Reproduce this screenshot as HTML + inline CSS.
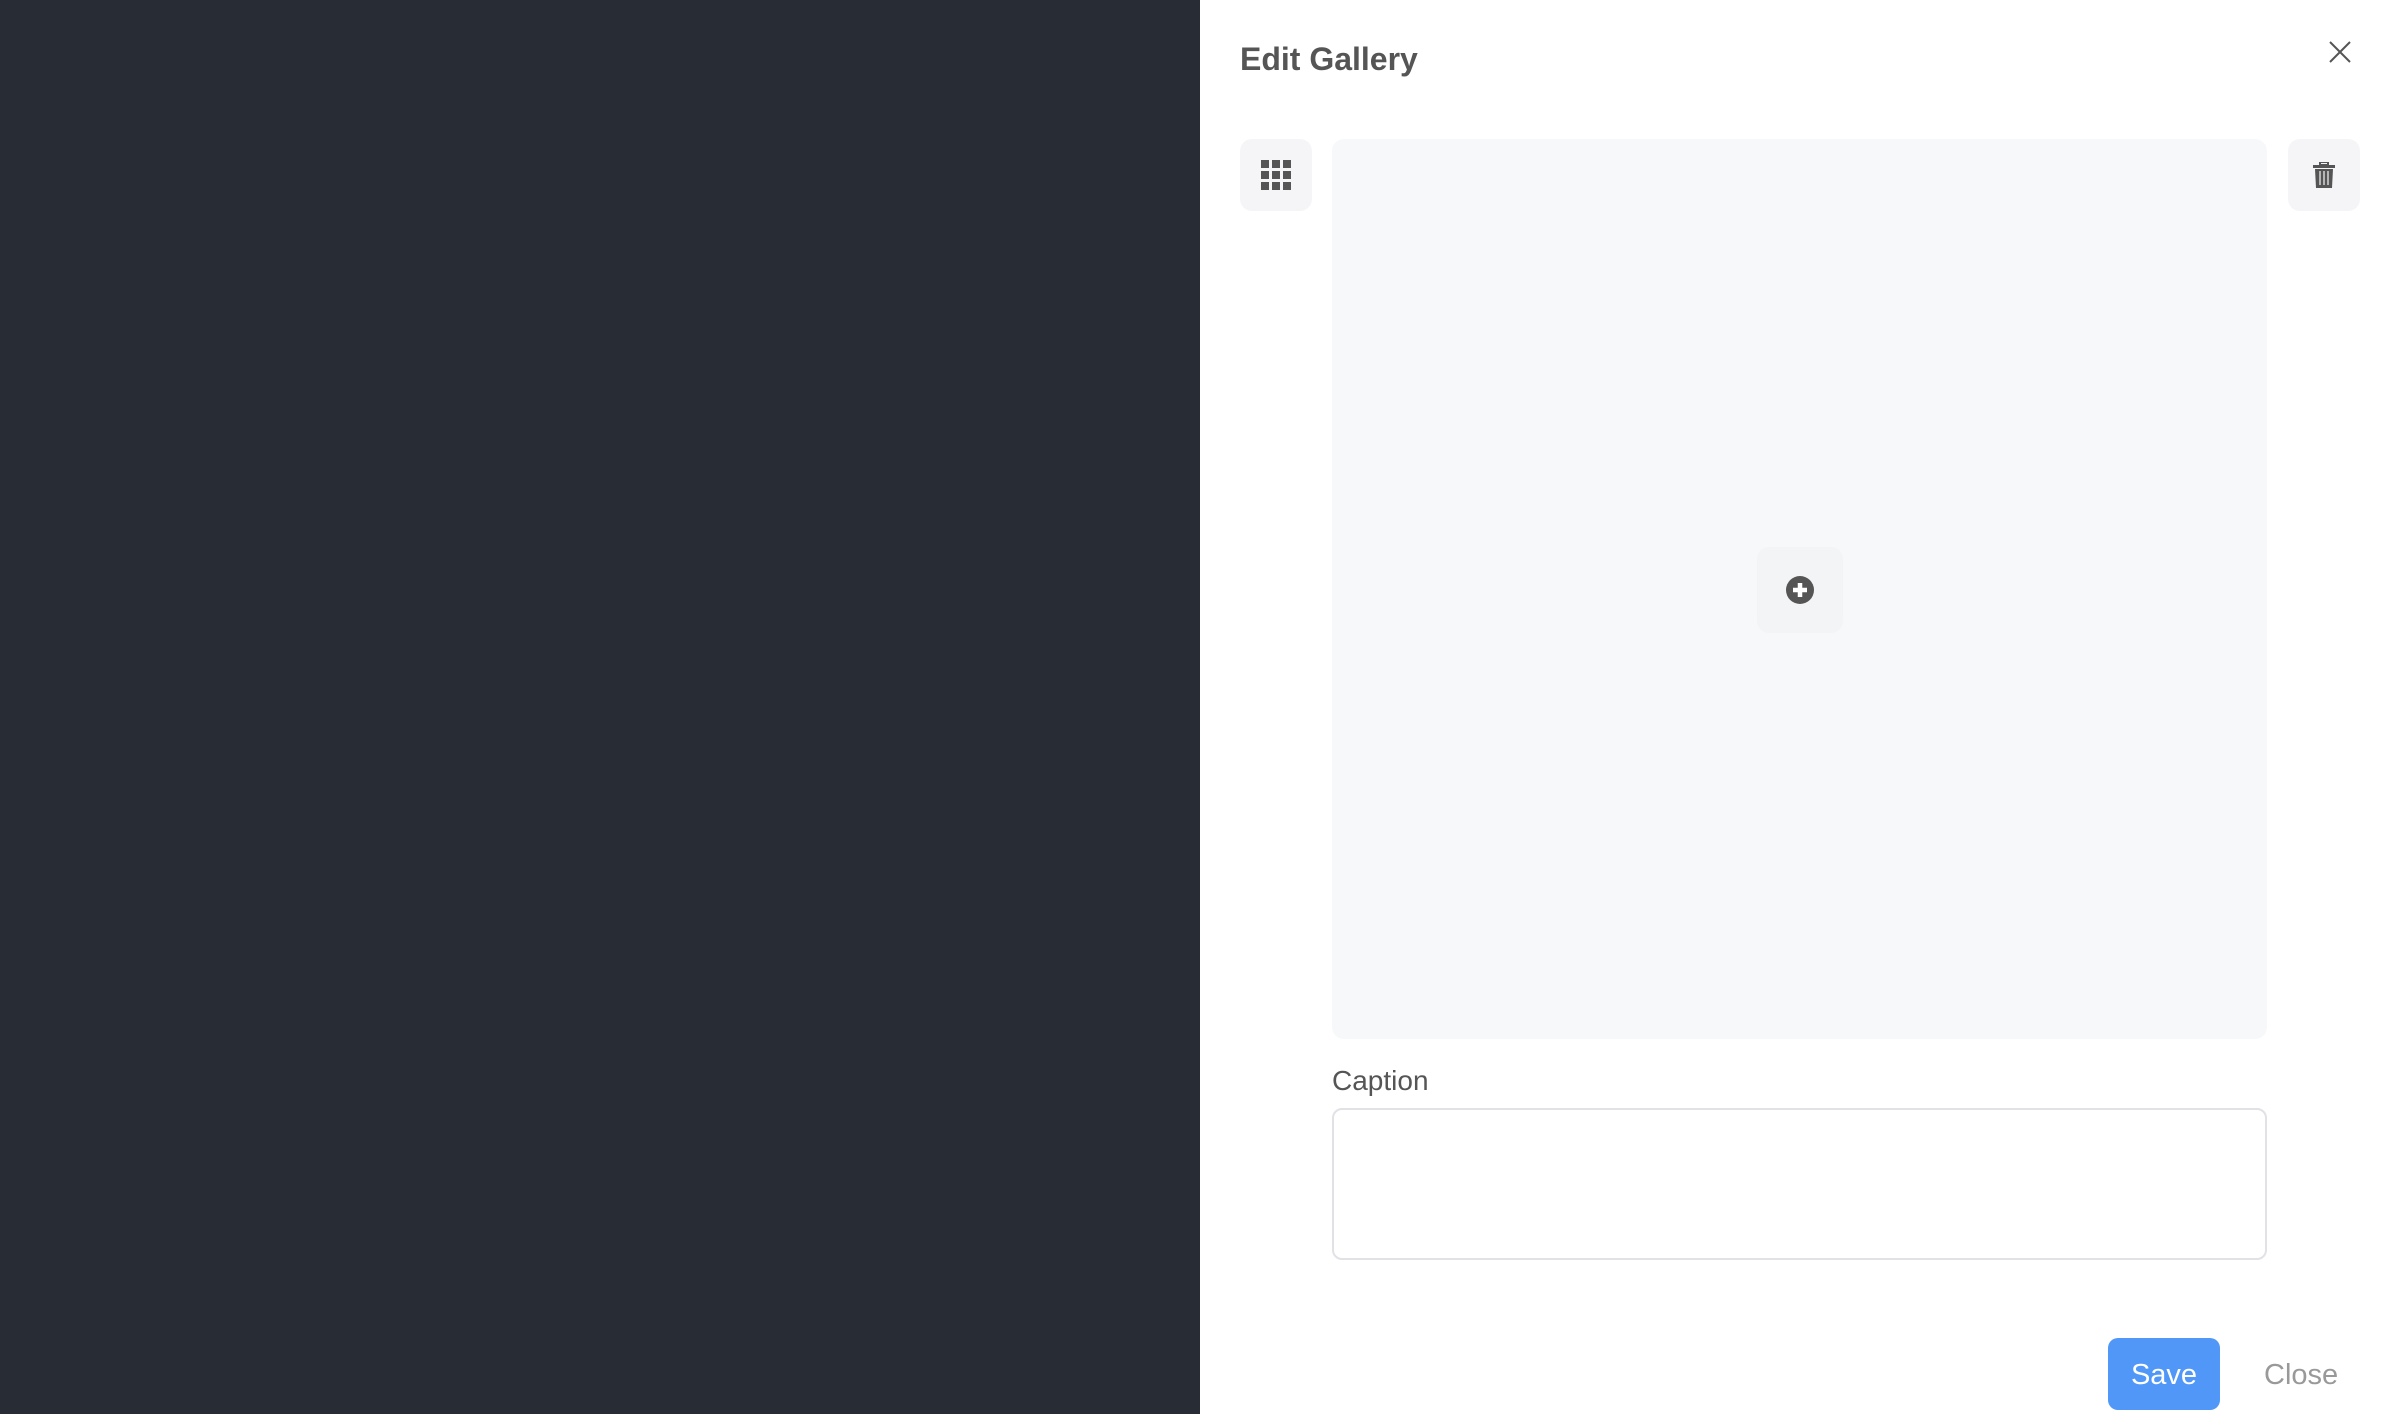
<!DOCTYPE html>
<html><head><meta charset="utf-8"><style>
*{margin:0;padding:0;box-sizing:border-box}
body{width:2400px;height:1414px;overflow:hidden;font-family:"Liberation Sans",Arial,sans-serif;background:#fff;position:relative}
.dark{position:absolute;left:0;top:0;width:1200px;height:1414px;background:#282c35}
.abs{position:absolute}
h1{position:absolute;left:1240px;top:39px;font-size:32px;font-weight:bold;color:#555;line-height:40px}
.btn{position:absolute;width:72px;height:72px;background:#f5f5f7;border-radius:12px;display:flex;align-items:center;justify-content:center}
.img{position:absolute;left:1332px;top:139px;width:935px;height:900px;background:#f7f8fa;border-radius:12px}
.plus{position:absolute;left:1757px;top:547px;width:86px;height:86px;background:#f3f4f6;border-radius:12px;display:flex;align-items:center;justify-content:center}
.cap{position:absolute;left:1332px;top:1064px;font-size:28px;color:#555;line-height:34px}
.ta{position:absolute;left:1332px;top:1108px;width:935px;height:152px;border:2px solid #e2e2e6;border-radius:10px}
.save{position:absolute;left:2108px;top:1338px;width:112px;height:72px;background:#5097f8;border-radius:10px;color:#fff;font-size:29px;display:flex;align-items:center;justify-content:center;padding-top:2px}
.close{position:absolute;left:2264px;top:1357px;font-size:29px;color:#999;line-height:36px}
</style></head><body>
<div class="dark"></div>
<h1>Edit Gallery</h1>
<svg class="abs" style="left:2329px;top:41px" width="22" height="22" viewBox="0 0 22 22"><path d="M1 1L21 21M21 1L1 21" stroke="#555" stroke-width="2"/></svg>
<div class="btn" style="left:1240px;top:139px"><svg width="30" height="30" viewBox="0 0 30 30" fill="#555"><rect x="0" y="0" width="8" height="8"/><rect x="11" y="0" width="8" height="8"/><rect x="22" y="0" width="8" height="8"/><rect x="0" y="11" width="8" height="8"/><rect x="11" y="11" width="8" height="8"/><rect x="22" y="11" width="8" height="8"/><rect x="0" y="22" width="8" height="8"/><rect x="11" y="22" width="8" height="8"/><rect x="22" y="22" width="8" height="8"/></svg></div>
<div class="img"></div>
<div class="btn" style="left:2288px;top:139px"><svg width="22" height="26" viewBox="0 0 22 26"><rect x="7" y="0" width="8" height="3" fill="none" stroke="#555" stroke-width="2"/><rect x="0" y="3" width="22" height="3" fill="#555"/><path d="M2 7H20L19 26H3Z" fill="#555"/><path d="M7 9V23M11 9V23M15 9V23" stroke="#f5f5f7" stroke-width="1.2"/></svg></div>
<div class="plus"><svg width="28" height="28" viewBox="0 0 28 28"><circle cx="14" cy="14" r="14" fill="#555"/><path d="M14 7V21M7 14H21" stroke="#fff" stroke-width="4.5"/></svg></div>
<div class="cap">Caption</div>
<div class="ta"></div>
<div class="save">Save</div>
<div class="close">Close</div>
</body></html>
